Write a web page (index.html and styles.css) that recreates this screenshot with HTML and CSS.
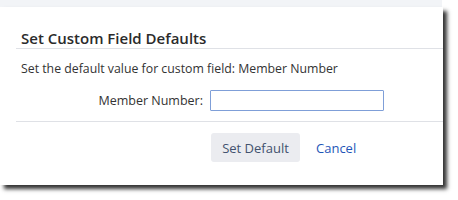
FILE: index.html
```html
<!DOCTYPE html>
<html>
<head>
<meta charset="utf-8">
<link rel="stylesheet" href="styles.css">
</head>
<body>
<div class="strip"></div>
<div class="dialog">
  <div class="header"><h2 class="title">Set Custom Field Defaults</h2></div>
  <p class="desc">Set the default value for custom field: Member Number</p>
  <div class="field-row">
    <label class="label" for="mn">Member Number:</label>
    <input class="input" id="mn" type="text">
  </div>
  <div class="footer">
    <button class="btn">Set Default</button>
    <a class="link" href="#">Cancel</a>
  </div>
</div>
</body>
</html>
```
FILE: styles.css
```css
html, body {
  margin: 0;
  padding: 0;
  background: #fff;
}
body {
  font-family: "Open Sans", "Noto Sans", sans-serif;
  color: #333;
  height: 200px;
}
.strip {
  width: 442px;
  height: 7px;
  background: #f2f4f7;
}
.dialog {
  width: 443px;
  height: 178px;
  background: #fff;
  box-shadow: 4px 4px 4px 0 rgba(0, 0, 0, 0.8);
  display: flex;
  flex-direction: column;
}
.header {
  margin: 21px 0 0 16px;
  padding-left: 5px;
  border-bottom: 1px solid #dfe1e6;
}
.title {
  margin: 0;
  font-size: 15px;
  font-weight: 600;
  line-height: 20px;
  color: #2b2b2b;
}
.desc {
  margin: 11px 0 0 21px;
  font-size: 12.3px;
  line-height: 18px;
}
.field-row {
  display: flex;
  align-items: center;
  margin-top: 12px;
  padding-bottom: 10px;
  margin-left: 16px;
  border-bottom: 1px solid #dfe1e6;
}
.label {
  width: 187px;
  text-align: right;
  font-size: 12.5px;
  padding-right: 7px;
}
.input {
  box-sizing: border-box;
  width: 174px;
  height: 21px;
  margin: 0;
  border: 1px solid #7f9fd8;
  border-radius: 1px;
  outline: none;
}
.footer {
  display: flex;
  align-items: center;
  padding: 11px 0 0 211px;
}
.btn {
  height: 29px;
  width: 89px;
  padding: 0;
  border: 0;
  border-radius: 3px;
  background: #ebecf0;
  color: #42526e;
  font-family: inherit;
  font-size: 13px;
}
.link {
  margin-left: 16px;
  color: #1f56b8;
  text-decoration: none;
  font-size: 13px;
}
```
